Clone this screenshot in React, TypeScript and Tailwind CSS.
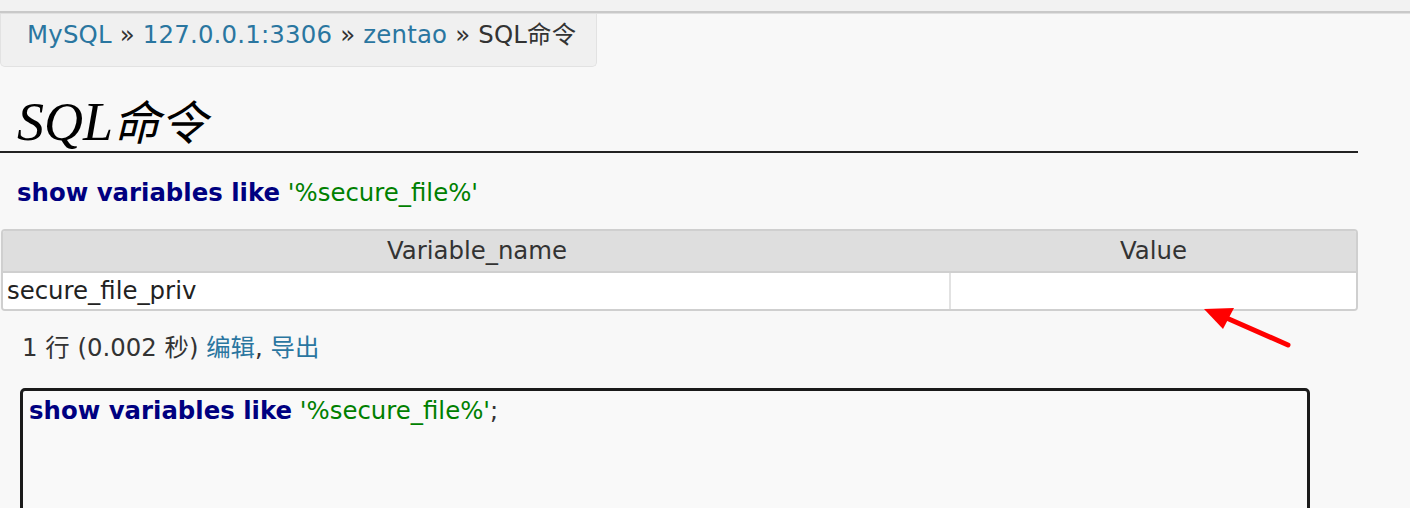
export default function App() {
  const sans = { fontFamily: '"DejaVu Sans", "Noto Sans CJK SC", sans-serif' };
  return (
    <div className="relative w-[1410px] h-[508px] overflow-hidden bg-[#f8f8f8] text-[#333]" style={sans}>
      <div className="h-[11px] bg-[#f2f2f2]" />
      <div className="h-[3px] bg-[#c9c9c9] border-b border-[#e0e0e0]" />
      <div className="w-[597px] h-[53px] bg-[#f0f0f0] border border-t-0 border-[#e2e2e2] rounded-b-[5px] pl-[26px] pt-[5px] text-[24.4px] leading-[32px] tracking-[0.2px] whitespace-nowrap">
        <a className="text-[#2a76a0]">MySQL</a> » <a className="text-[#2a76a0]">127.0.0.1:3306</a> » <a className="text-[#2a76a0]">zentao</a> » SQL命令
      </div>
      <h2
        className="h-[84px] pt-[28px] pl-[17px] text-[54px] leading-[54px] italic font-normal text-black whitespace-nowrap"
        style={{ fontFamily: '"Liberation Serif", "Noto Sans CJK SC", serif' }}
      >
        SQL<span className="text-[47px]">命令</span>
      </h2>
      <div className="w-[1358px] h-[2px] bg-[#222]" />
      <div className="mt-[25px] ml-[17px] h-[30px] text-[24.4px] leading-[30px] whitespace-nowrap">
        <span className="font-bold text-[#000080]">show variables like</span>{" "}
        <span className="text-[#008000]">'%secure_file%'</span>
      </div>
      <div className="mt-[21px] ml-px w-[1357px] border-2 border-[#cfcfcf] rounded-[4px] overflow-hidden">
        <div className="flex h-[42px] bg-[#dedede] border-b-2 border-[#cfcfcf] text-[24.4px] leading-[40px] text-[#333]">
          <div className="w-[948px] text-center">Variable_name</div>
          <div className="flex-1 text-center">Value</div>
        </div>
        <div className="flex h-[36px] bg-white text-[24.4px] leading-[36px] text-[#222]">
          <div className="w-[948px] pl-[4px] border-r-2 border-[#e2e2e2] whitespace-nowrap">secure_file_priv</div>
          <div className="flex-1" />
        </div>
      </div>
      <div className="mt-[22px] ml-[22px] h-[30px] text-[24.4px] leading-[30px] text-[#333] whitespace-nowrap">
        1 行 (0.002 秒) <a className="text-[#2a76a0]">编辑</a>, <a className="text-[#2a76a0]">导出</a>
      </div>
      <div className="mt-[25px] ml-[20px] w-[1290px] h-[140px] border-[3px] border-[#1a1a1a] rounded-[5px] bg-[#f9f9f9] pl-[6px] pt-[4px] text-[24.4px] leading-[32px] whitespace-nowrap">
        <span className="font-bold text-[#000080]">show variables like</span>{" "}
        <span className="text-[#008000]">'%secure_file%'</span>;
      </div>
      <svg className="absolute left-0 top-0" width="1410" height="508" viewBox="0 0 1410 508">
        <line x1="1288" y1="345" x2="1222" y2="316" stroke="#ff0000" strokeWidth="5" strokeLinecap="round" />
        <polygon points="1204,309 1234,308 1223,329" fill="#ff0000" />
      </svg>
    </div>
  );
}
